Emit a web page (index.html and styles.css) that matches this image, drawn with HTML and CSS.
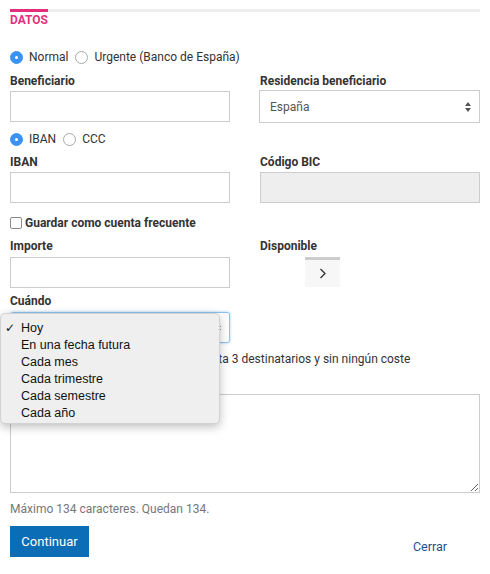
FILE: index.html
```html
<!DOCTYPE html>
<html lang="es">
<head>
<meta charset="utf-8">
<title>Datos</title>
<link rel="stylesheet" href="styles.css">
</head>
<body>
<div class="page">
  <div class="tabbar"><span class="tab-active"></span><span class="tab-rest"></span></div>
  <div class="tab-title">DATOS</div>

  <div class="radio-row r-first">
    <label class="radio"><span class="dot on"></span>Normal</label>
    <label class="radio"><span class="dot"></span>Urgente (Banco de España)</label>
  </div>

  <div class="two r-bene">
    <div class="field">
      <div class="label">Beneficiario</div>
      <input class="input" type="text">
    </div>
    <div class="field">
      <div class="label">Residencia beneficiario</div>
      <div class="select">
        <span>España</span>
        <svg class="arrows" width="6" height="10" viewBox="0 0 6 10"><path d="M3 0 L6 4 L0 4 Z M0 6 L6 6 L3 10 Z" fill="#555"/></svg>
      </div>
    </div>
  </div>

  <div class="radio-row r-iban">
    <label class="radio"><span class="dot on"></span>IBAN</label>
    <label class="radio"><span class="dot"></span>CCC</label>
  </div>

  <div class="two r-ibanf">
    <div class="field">
      <div class="label">IBAN</div>
      <input class="input" type="text">
    </div>
    <div class="field">
      <div class="label">Código BIC</div>
      <input class="input disabled" type="text" disabled>
    </div>
  </div>

  <label class="check-row"><span class="box"></span>Guardar como cuenta frecuente</label>

  <div class="two r-imp">
    <div class="field">
      <div class="label">Importe</div>
      <input class="input in-imp" type="text">
    </div>
    <div class="field">
      <div class="label">Disponible</div>
      <button class="disp-btn" type="button">
        <svg width="8" height="11" viewBox="0 0 8 11"><path d="M1.5 1 L6 5.5 L1.5 10" fill="none" stroke="#333" stroke-width="1.3"/></svg>
      </button>
    </div>
  </div>

  <div class="field when">
    <div class="label">Cuándo</div>
    <div class="select focus">
      <span>Hoy</span>
      <svg class="arrows" width="6" height="10" viewBox="0 0 6 10"><path d="M3 0 L6 4 L0 4 Z M0 6 L6 6 L3 10 Z" fill="#555"/></svg>
    </div>
    <ul class="menu">
      <li class="sel"><span class="tick">✓</span>Hoy</li>
      <li>En una fecha futura</li>
      <li>Cada mes</li>
      <li>Cada trimestre</li>
      <li>Cada semestre</li>
      <li>Cada año</li>
    </ul>
  </div>

  <p class="note">Envía un aviso gratuito por e-mail a hasta 3 destinatarios y sin ningún coste</p>

  <textarea class="textarea" aria-label="Concepto"></textarea>
  <p class="hint">Máximo 134 caracteres. Quedan 134.</p>

  <div class="actions">
    <button class="primary" type="button">Continuar</button>
    <a class="close" href="#">Cerrar</a>
  </div>
</div>
</body>
</html>
```

FILE: styles.css
```css
* { box-sizing: border-box; }
html, body { margin: 0; padding: 0; background: #fff; }
body {
  font-family: Roboto, "Liberation Sans", Arial, sans-serif;
  font-size: 12px;
  line-height: 16px;
  color: #333;
}
.page {
  width: 490px;
  padding: 9px 10px 0 10px;
}
.tabbar {
  display: flex;
  height: 3px;
}
.tab-active { width: 38px; background: #e4307c; }
.tab-rest { flex: 1; background: #eeeeee; }
.tab-title {
  height: 16px;
  font-weight: 700;
  color: #e4307c;
}

.radio-row {
  display: flex;
  align-items: center;
  height: 16px;
  gap: 7px;
}
.r-first { margin-top: 21px; }
.r-iban { margin-top: 8px; }
.radio {
  display: flex;
  align-items: center;
  gap: 6px;
  color: #333;
}
.dot {
  width: 13px;
  height: 13px;
  border-radius: 50%;
  border: 1px solid #a9a9a9;
  background: #fff;
  position: relative;
}
.dot.on {
  border-color: #3a93f4;
  background: #3a93f4;
}
.dot.on::after {
  content: "";
  position: absolute;
  left: 4px; top: 4px;
  width: 3px; height: 3px;
  border-radius: 50%;
  background: #fff;
}

.two {
  display: grid;
  grid-template-columns: 220px 1fr;
  column-gap: 30px;
  align-items: start;
}
.r-bene { margin-top: 8px; }
.r-ibanf { margin-top: 7px; }
.r-imp { margin-top: 7px; }

.label {
  height: 16px;
  font-weight: 700;
  color: #333;
}
.input {
  display: block;
  width: 100%;
  height: 31px;
  margin: 2px 0 0 0;
  border: 1px solid #cccccc;
  background: #fff;
  padding: 0 10px;
  font: inherit;
}
.input.disabled { background: #eeeeee; }
.in-imp { margin-top: 3px; }

.select {
  display: flex;
  align-items: center;
  justify-content: space-between;
  height: 33px;
  margin: 1px 0 0 -1px;
  padding: 0 8px 0 10px;
  border: 1px solid #cccccc;
  background: #fff;
  color: #555;
}
.arrows { display: block; }

.check-row {
  display: flex;
  align-items: center;
  gap: 3px;
  height: 16px;
  margin-top: 12px;
  font-weight: 700;
  color: #333;
}
.box {
  width: 12px;
  height: 12px;
  border: 1px solid #8a8a8a;
  border-radius: 2px;
  background: #fff;
}

.disp-btn {
  display: flex;
  align-items: center;
  justify-content: center;
  width: 35px;
  height: 30px;
  margin: 3px 0 0 45px;
  padding: 0;
  border: 0;
  border-top: 3px solid #cccccc;
  background: #f7f7f7;
}

.when {
  position: relative;
  width: 220px;
  margin-top: 5px;
}
.select.focus {
  height: 31px;
  margin: 3px 0 0 0;
  border-color: #8fc1ee;
  border-radius: 3px;
  box-shadow: 0 0 3px rgba(102, 175, 233, 0.6);
}
.menu {
  position: absolute;
  left: -10px;
  top: 20px;
  width: 220px;
  height: 111px;
  margin: 0;
  padding: 6px 0 0 0;
  list-style: none;
  background: #efefef;
  border: 1px solid #d2d2d2;
  border-radius: 5px;
  box-shadow: 0 3px 10px rgba(0, 0, 0, 0.25);
  font-family: "Liberation Sans", Arial, sans-serif;
  font-size: 12.5px;
  line-height: 17px;
  color: #111;
  z-index: 5;
}
.menu li {
  position: relative;
  padding-left: 20px;
  height: 17px;
}
.tick {
  position: absolute;
  left: 4px;
  top: 0;
  font-family: "DejaVu Sans", sans-serif;
  font-size: 12px;
  font-weight: 700;
}

.note {
  margin: 8px 0 0 0;
  height: 16px;
  color: #333;
  white-space: nowrap;
}
.textarea {
  display: block;
  width: 470px;
  height: 99px;
  margin: 27px 0 0 0;
  border: 1px solid #cccccc;
  padding: 6px 10px;
  font: inherit;
  resize: vertical;
}
.hint {
  margin: 8px 0 0 0;
  height: 16px;
  color: #777;
}
.actions {
  display: flex;
  justify-content: space-between;
  align-items: flex-end;
  margin-top: 9px;
}
.primary {
  height: 31px;
  width: 79px;
  padding: 0;
  border: 0;
  background: #0b6db5;
  color: #fff;
  font-family: Roboto, "Liberation Sans", Arial, sans-serif;
  font-size: 13px;
}
.close {
  margin: 0 33px 2px 0;
  color: #1d4f8f;
  text-decoration: none;
  font-size: 12.5px;
}
```
